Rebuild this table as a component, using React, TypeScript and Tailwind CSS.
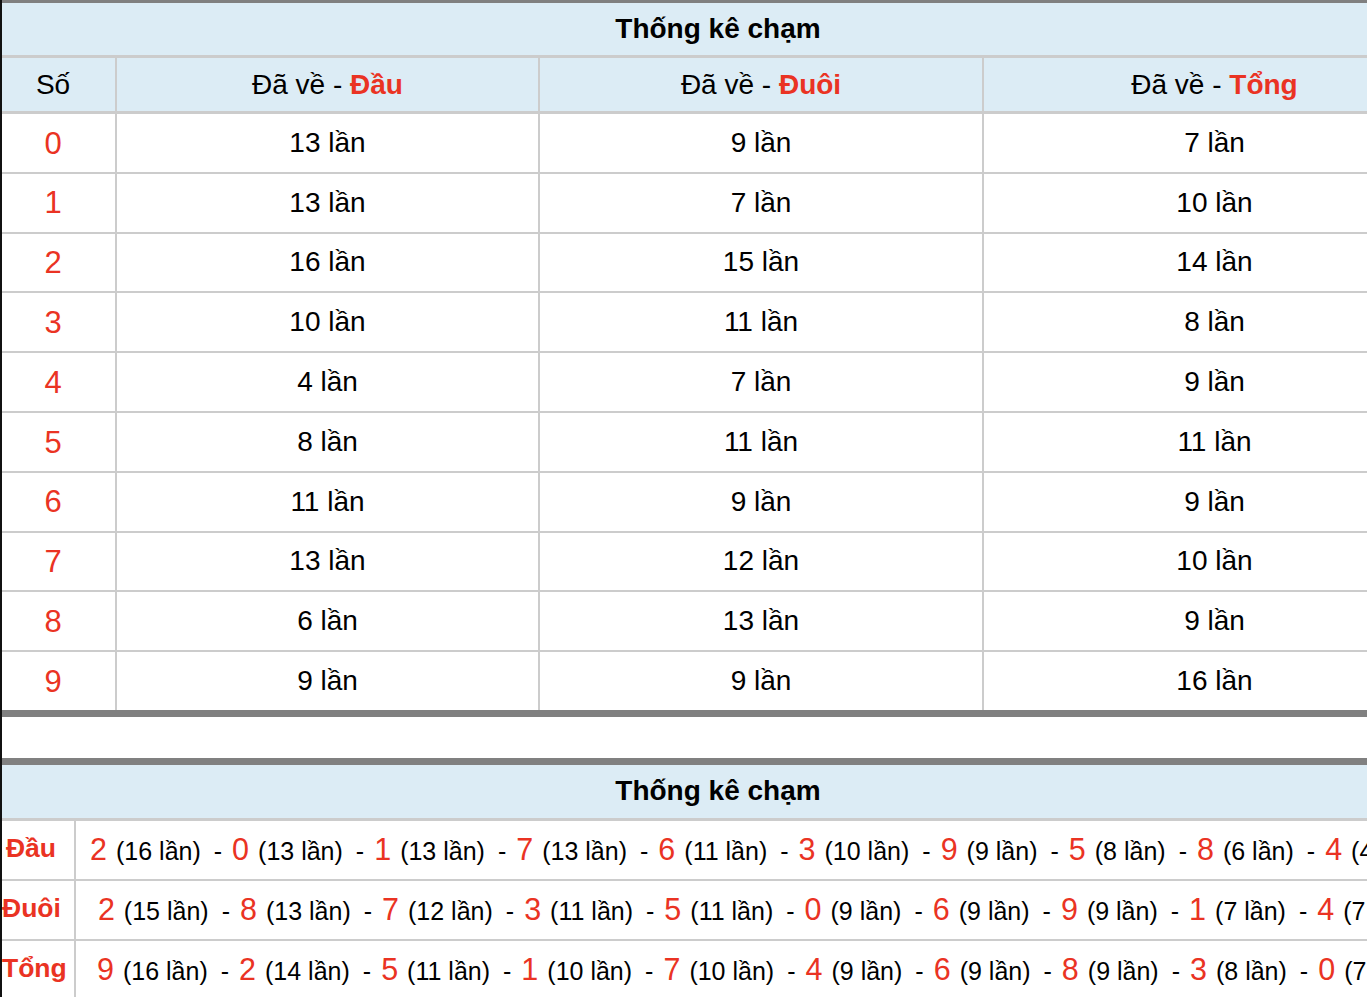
const counts = [
  [13, 9, 7],
  [13, 7, 10],
  [16, 15, 14],
  [10, 11, 8],
  [4, 7, 9],
  [8, 11, 11],
  [11, 9, 9],
  [13, 12, 10],
  [6, 13, 9],
  [9, 9, 16],
];

const labels = ["Đầu", "Đuôi", "Tổng"];

// sort digits by count desc, keep digit order for ties
const ranked = (col: number) =>
  counts
    .map((c, d) => ({ d, n: c[col] }))
    .sort((a, b) => b.n - a.n || a.d - b.d);

const cols = ["w-[113px]", "w-[423px]", "w-[444px]", "w-[463px]"];

const App = () => {
  return (
    <div
      className="w-full overflow-hidden bg-white border-l-2 border-[#111] min-h-screen"
      style={{ fontFamily: '"Liberation Sans", Arial, sans-serif' }}
    >
      <div className="w-[1445px] text-black">
        {/* table 1 */}
        <div className="border-t-[3px] border-[#808080] border-b-[7px]">
          <div className="h-[52px] bg-[#dcecf5] flex items-center justify-center pr-[13px] text-[28px] font-bold">
            Thống kê chạm
          </div>
          <div className="flex h-[56px] bg-[#dcecf5] border-t-[3px] border-[#cccccc] text-[28px]">
            <div className={`${cols[0]} flex items-center justify-center pr-[11px]`}>Số</div>
            {labels.map((l, i) => (
              <div key={l} className={`${cols[i + 1]} flex items-center justify-center border-l-2 border-[#cccccc]`}>
                Đã về -&nbsp;<span className="font-bold text-[#ea3323]">{l}</span>
              </div>
            ))}
          </div>
          {counts.map((row, d) => (
            <div key={d} className={`flex border-[#cccccc] ${d > 0 ? "h-[59.8px] border-t-2" : "h-[60.8px] border-t-[3px]"}`}>
              <div className={`${cols[0]} flex items-center justify-center pr-[11px] text-[31px] text-[#ea3323] pt-[2px]`}>{d}</div>
              {row.map((n, i) => (
                <div key={i} className={`${cols[i + 1]} flex items-center justify-center border-l-2 border-[#cccccc] text-[28px]`}>
                  {n} lần
                </div>
              ))}
            </div>
          ))}
        </div>

        <div className="h-[41px]" />

        {/* table 2 */}
        <div className="border-t-[7px] border-[#808080]">
          <div className="h-[53px] bg-[#dcecf5] flex items-center justify-center pr-[13px] text-[28px] font-bold">
            Thống kê chạm
          </div>
          {labels.map((l, i) => (
            <div key={l} className={`flex border-[#cccccc] ${i > 0 ? "h-[60px] border-t-2" : "h-[61px] border-t-[3px]"}`}>
              <div className="w-[72px] pr-[14px] flex items-center">
                <div className="w-full text-center whitespace-nowrap font-bold text-[26.5px] text-[#ea3323] -mt-[2px]">{l}</div>
              </div>
              <div className="flex-1 border-l-2 border-[#cccccc] flex items-center justify-center pr-[11px] whitespace-nowrap text-[25px]">
                <span>
                  {ranked(i).map((r, k) => (
                    <span key={r.d}>
                      <span className="text-[30.5px] text-[#ea3323]">{r.d}</span>
                      <span className="ml-[9px]">({r.n} lần)</span>
                      {k < 9 && <span className="ml-[13px] mr-[10px]">-</span>}
                    </span>
                  ))}
                </span>
              </div>
            </div>
          ))}
        </div>
      </div>
    </div>
  );
};

export default App;
